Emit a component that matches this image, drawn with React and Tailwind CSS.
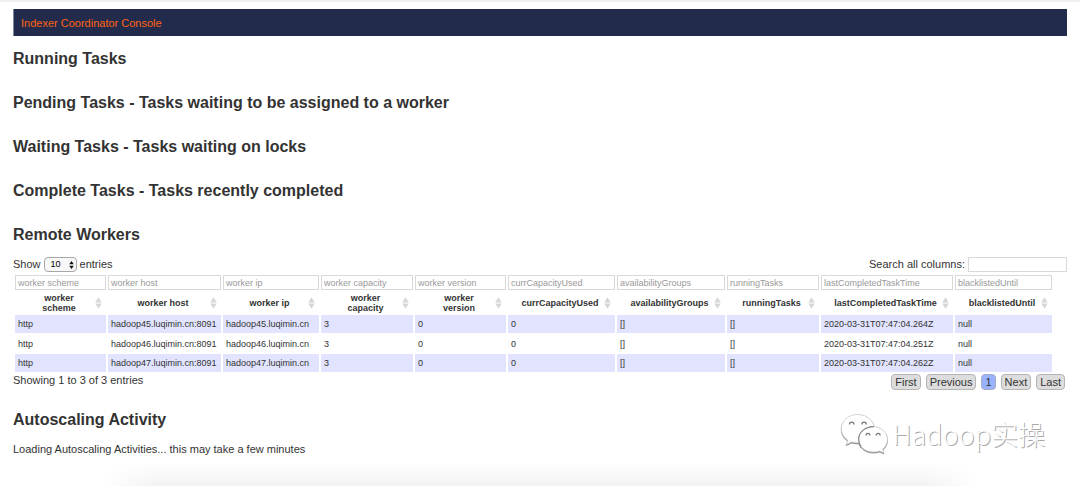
import React, { useState } from 'react';

const taskSections = [
  'Running Tasks',
  'Pending Tasks - Tasks waiting to be assigned to a worker',
  'Waiting Tasks - Tasks waiting on locks',
  'Complete Tasks - Tasks recently completed'
];

const columns = [
  { id: 'worker scheme', width: 'w-[91px]' },
  { id: 'worker host', width: 'w-[113px]' },
  { id: 'worker ip', width: 'w-[96px]' },
  { id: 'worker capacity', width: 'w-[92px]' },
  { id: 'worker version', width: 'w-[91px]' },
  { id: 'currCapacityUsed', width: 'w-[107px]' },
  { id: 'availabilityGroups', width: 'w-[108px]' },
  { id: 'runningTasks', width: 'w-[92px]' },
  { id: 'lastCompletedTaskTime', width: 'w-[132px]' },
  { id: 'blacklistedUntil', width: 'w-[97px]' }
];

const workers = [
  ['http', 'hadoop45.luqimin.cn:8091', 'hadoop45.luqimin.cn', '3', '0', '0', '[]', '[]', '2020-03-31T07:47:04.264Z', 'null'],
  ['http', 'hadoop46.luqimin.cn:8091', 'hadoop46.luqimin.cn', '3', '0', '0', '[]', '[]', '2020-03-31T07:47:04.251Z', 'null'],
  ['http', 'hadoop47.luqimin.cn:8091', 'hadoop47.luqimin.cn', '3', '0', '0', '[]', '[]', '2020-03-31T07:47:04.262Z', 'null']
];

const SectionTitle = ({ children }) => (
  <h2 className="text-base leading-5 font-bold text-[#333333]">{children}</h2>
);

const SortIcon = () => (
  <svg className="w-[7px] h-3 shrink-0" viewBox="0 0 7 12" fill="#d6d6d6" aria-hidden="true">
    <path d="M3.5 0.3 L6.7 5.4 H0.3 Z" />
    <path d="M3.5 11.7 L6.7 6.6 H0.3 Z" />
  </svg>
);

const PageButton = ({ label, active }) => (
  <button
    className={`h-4 px-[3px] rounded-[4px] border text-[11px] leading-[14px] cursor-pointer ${active
      ? 'bg-[#99b3ff] border-[#a3aac4]'
      : 'bg-[#dddddd] border-[#b5b5b5]'
      }`}
  >
    {label}
  </button>
);

const Watermark = () => (
  <div className="absolute right-[35px] bottom-[31px] flex items-center gap-1 pointer-events-none">
    <svg className="w-[48px] h-[42px] drop-shadow-[0px_1px_0px_#888888]" viewBox="0 0 49 43" fill="#ffffff" stroke="#c8c8c8" strokeWidth="0.8">
      <path d="M18 1.5 C8.5 1.5 1.3 8 1.3 16 C1.3 20.8 3.8 25 8 27.8 L6.3 32.3 L12 29.6 C15 30.6 18 30.8 21 30.4 C28 30 35 23.5 35 16 C35 8 27.5 1.5 18 1.5 Z" />
      <path d="M34 14 C25.5 14 19 19.8 19 27 C19 34.4 25.5 40 34 40 C36.2 40 38.5 39.6 40.6 38.8 L44.8 41 L43.7 37 C46.8 34.6 48.5 31 48.5 27 C48.5 19.8 42 14 34 14 Z" />
      <path d="M34.5 14 C25.5 14 19 19.8 19 27 C19 30 20 32.5 21.5 34.5" fill="none" stroke="#888888" strokeWidth="1.2" />
      <g fill="none" stroke="#777777" strokeWidth="1.3">
        <path d="M9.6 11.8 a2.3 2.4 0 0 1 4.6 0" />
        <path d="M22.3 11.8 a2.3 2.4 0 0 1 4.6 0" />
        <path d="M26.5 23 a2 2.1 0 0 1 4 0" />
        <path d="M37 23 a2 2.1 0 0 1 4 0" />
      </g>
    </svg>
    <span className="font-['Noto_Sans_CJK_SC',sans-serif] text-[27px] leading-9 font-light text-white [text-shadow:1px_1px_0px_#aaaaaa]">
      Hadoop实操
    </span>
  </div>
);

const App = () => {
  const [pageSize, setPageSize] = useState('10');

  return (
    <div className="relative min-h-screen flex flex-col bg-white border-t-2 border-[#f0f0f0] px-[13px] pt-[7px] font-['Liberation_Sans',Arial,sans-serif] text-[11px] leading-4 text-[#333333]">
      <nav className="bg-[#222b4b] border-l border-[#8289a0] h-[27px] px-[7px] flex items-center shrink-0">
        <a href="#console" className="text-[#ff6315]">Indexer Coordinator Console</a>
      </nav>

      <main className="pt-[13px]">
        <div className="flex flex-col gap-6">
          {taskSections.map((title) => (
            <SectionTitle key={title}>{title}</SectionTitle>
          ))}
          <SectionTitle>Remote Workers</SectionTitle>
        </div>

        {/* Table controls */}
        <div className="flex items-center justify-between h-4 mt-[11px]">
          <label className="flex items-center gap-[3px]">
            Show
            <span className="relative flex">
              <select
                value={pageSize}
                onChange={(e) => setPageSize(e.target.value)}
                className="appearance-none w-[33px] h-[15px] pl-1.5 rounded-[4px] border border-[#a8a8a8] bg-[#f8f8f8] text-[9px] leading-3 text-black"
              >
                <option>10</option>
                <option>25</option>
                <option>50</option>
                <option>100</option>
              </select>
              <svg className="absolute right-[3px] top-1 w-[5px] h-2 pointer-events-none" viewBox="0 0 5 8" fill="#111111">
                <path d="M2.5 0 L4.8 3.2 H0.2 Z" />
                <path d="M2.5 8 L4.8 4.8 H0.2 Z" />
              </svg>
            </span>
            entries
          </label>
          <label className="flex items-center gap-[3px]">
            Search all columns:
            <input type="text" className="w-[99px] h-[15px] border border-[#d9d9d9] px-0.5 text-[9px]" />
          </label>
        </div>

        <table className="w-[98.7%] mt-px table-fixed border-separate border-spacing-x-[2px] border-spacing-y-[2px] text-[9px] leading-[10px]">
          <colgroup>
            {columns.map((col) => (
              <col key={col.id} className={col.width} />
            ))}
          </colgroup>
          <thead>
            <tr>
              {columns.map((col) => (
                <th key={col.id} className="p-0 h-[15px]">
                  <input
                    type="text"
                    placeholder={col.id}
                    aria-label={col.id}
                    className="block w-full h-[15px] border border-[#d9d9d9] px-[2px] font-normal placeholder:text-[#999999]"
                  />
                </th>
              ))}
            </tr>
            <tr>
              {columns.map((col) => (
                <th key={col.id} className="h-[21px] p-0 pl-2 pr-1 font-bold">
                  <div className="flex items-center">
                    <span className="flex-1 px-1">{col.id}</span>
                    <SortIcon />
                  </div>
                </th>
              ))}
            </tr>
          </thead>
          <tbody>
            {workers.map((row) => (
              <tr key={row[1]} className="h-[18px] even:h-[17px] group">
                {row.map((cell, i) => (
                  <td key={columns[i].id} className="py-0 px-[3px] whitespace-nowrap group-odd:bg-[#e2e4ff]">{cell}</td>
                ))}
              </tr>
            ))}
          </tbody>
        </table>

        <div className="flex items-start justify-between">
          <p className="leading-3">Showing 1 to 3 of 3 entries</p>
          <div className="flex gap-[5px] pr-0.5">
            <PageButton label="First" />
            <PageButton label="Previous" />
            <PageButton label="1" active />
            <PageButton label="Next" />
            <PageButton label="Last" />
          </div>
        </div>

        <div className="mt-5">
          <SectionTitle>Autoscaling Activity</SectionTitle>
          <p className="mt-[11px]">Loading Autoscaling Activities... this may take a few minutes</p>
        </div>
      </main>

      <div className="mt-auto mx-[90px] h-6 bg-linear-to-b from-white to-[#f3f3f3] [mask-image:linear-gradient(to_right,transparent,black_6%,black_94%,transparent)]" />
      <Watermark />
    </div>
  );
};

export default App;
